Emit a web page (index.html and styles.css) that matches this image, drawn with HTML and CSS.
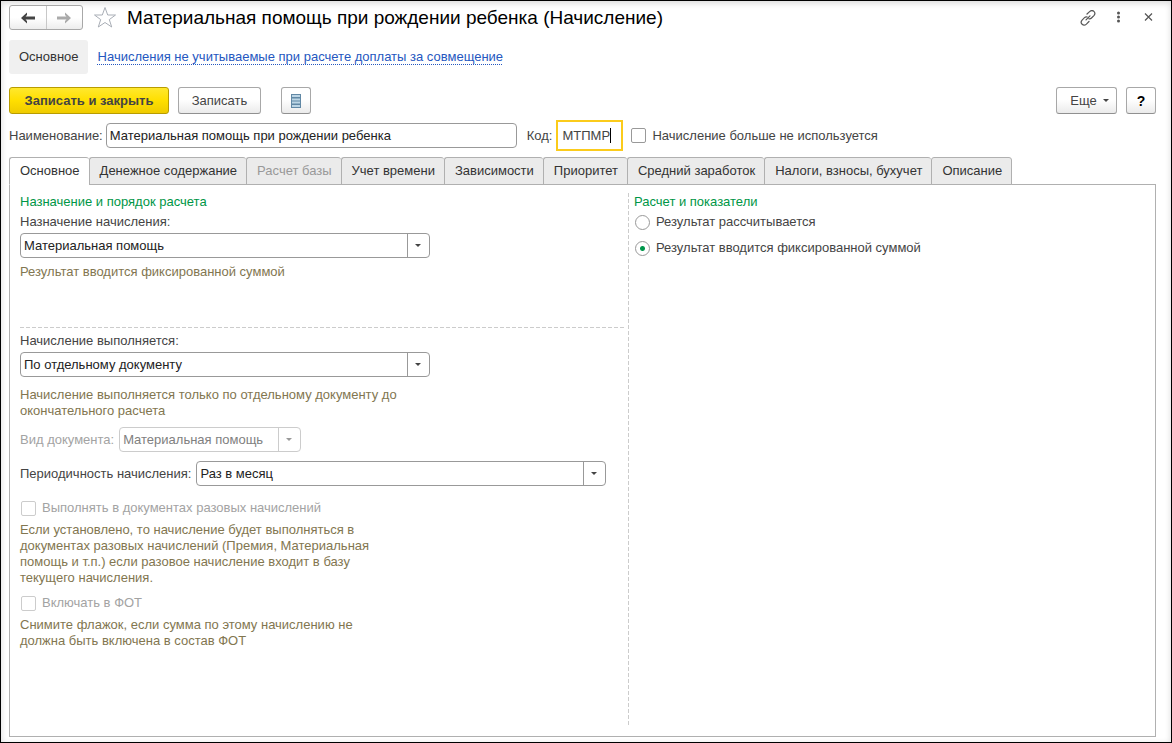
FILE: index.html
```html
<!DOCTYPE html>
<html lang="ru">
<head>
<meta charset="utf-8">
<title>Материальная помощь при рождении ребенка (Начисление)</title>
<link rel="stylesheet" href="styles.css">
</head>
<body>
<div class="window">
  <header class="titlebar">
    <div class="history">
      <button type="button" class="history-btn" aria-label="Назад"><svg width="16" height="12" viewBox="0 0 16 12"><path d="M7 0.500 1 6l6 5.500V9L5.500 7.500H15v-3H5.500L7 3z" fill="#444"/></svg></button>
      <button type="button" class="history-btn" aria-label="Вперед"><svg width="16" height="12" viewBox="0 0 16 12"><path d="M9 0.500 15 6l-6 5.500V9l1.500-1.500H1v-3h9.500L9 3z" fill="#aaa"/></svg></button>
    </div>
    <button type="button" class="icon-btn star" aria-label="В избранное"><svg width="24" height="23" viewBox="0 0 24 23"><path d="M12 1.500 14.700 9H22.500L16.300 13.600 18.700 21 12 16.500 5.300 21 7.700 13.600 1.500 9H9.300z" fill="none" stroke="#a9aeb6" stroke-width="1"/></svg></button>
    <h1 class="title">Материальная помощь при рождении ребенка (Начисление)</h1>
    <div class="window-tools">
      <button type="button" class="icon-btn" aria-label="Ссылка"><svg width="16" height="16" viewBox="0 0 16 16" fill="none" stroke="#555" stroke-width="1.200" stroke-linecap="round"><path d="M7 4 9.600 1.600c3-2.800 7 1 4.300 4L11.500 8c-.8.8-1.800 1-2.700.7"/><path d="M9 11.500 6.400 14.100c-3 2.800-7-1-4.300-4L4.500 7.700c.8-.8 1.800-1 2.700-.7"/><path d="M6 9.800 10 5.800"/></svg></button>
      <button type="button" class="icon-btn" aria-label="Меню"><svg width="16" height="16" viewBox="0 0 16 16" fill="#555"><circle cx="8.500" cy="3" r="1.500"/><circle cx="8.500" cy="7" r="1.500"/><circle cx="8.500" cy="11" r="1.500"/></svg></button>
      <button type="button" class="icon-btn" aria-label="Закрыть"><svg width="16" height="16" viewBox="0 0 16 16" stroke="#555" stroke-width="1.200"><path d="M5 3.500l7 7M12 3.500l-7 7"/></svg></button>
    </div>
  </header>

  <nav class="sections">
    <a class="section-current" href="#main">Основное</a>
    <a class="section-link" href="#compensation">Начисления не учитываемые при расчете доплаты за совмещение</a>
  </nav>

  <div class="commands">
    <button type="button" class="btn btn-primary">Записать и закрыть</button>
    <button type="button" class="btn btn-save">Записать</button>
    <button type="button" class="btn btn-list" aria-label="Список"><svg width="10" height="14" viewBox="0 0 10 14"><rect width="10" height="14" fill="#6188a5"/><path d="M1 2h8M1 5.500h8M1 8.500h8M1 12h8" stroke="#bcd5e5" stroke-width="2"/></svg></button>
    <button type="button" class="btn btn-more">Еще <span class="arrow"></span></button>
    <button type="button" class="btn btn-help">?</button>
  </div>

  <div class="fields">
    <label class="label" for="name">Наименование:</label>
    <input class="input input-name" id="name" type="text" value="Материальная помощь при рождении ребенка">
    <label class="label label-code" for="code">Код:</label>
    <span class="code"><input class="input-code" id="code" type="text" value="МТПМР"><span class="caret"></span></span>
    <label class="option option-unused"><input class="check" type="checkbox">Начисление больше не используется</label>
  </div>

  <div class="tabs" role="tablist">
    <button type="button" class="tab tab-active" role="tab" aria-selected="true">Основное</button>
    <button type="button" class="tab" role="tab">Денежное содержание</button>
    <button type="button" class="tab" role="tab" disabled>Расчет базы</button>
    <button type="button" class="tab" role="tab">Учет времени</button>
    <button type="button" class="tab" role="tab">Зависимости</button>
    <button type="button" class="tab" role="tab">Приоритет</button>
    <button type="button" class="tab" role="tab">Средний заработок</button>
    <button type="button" class="tab" role="tab">Налоги, взносы, бухучет</button>
    <button type="button" class="tab" role="tab">Описание</button>
  </div>

  <main class="panel" id="main">
    <section class="column-main">
      <div class="group group-purpose">
        <h2 class="heading">Назначение и порядок расчета</h2>
        <label class="label purpose-label" for="purpose">Назначение начисления:</label>
        <span class="select-box"><select class="select" id="purpose"><option>Материальная помощь</option></select></span>
        <p class="hint">Результат вводится фиксированной суммой</p>
      </div>
      <div class="group">
        <label class="label" for="execution">Начисление выполняется:</label>
        <span class="select-box"><select class="select" id="execution"><option>По отдельному документу</option></select></span>
        <p class="hint hint-execution">Начисление выполняется только по отдельному документу до окончательного расчета</p>
        <div class="row row-doc">
          <label class="label label-disabled" for="doc">Вид документа:</label>
          <span class="select-box select-box-short select-box-disabled"><select class="select" id="doc" disabled><option>Материальная помощь</option></select></span>
        </div>
        <div class="row">
          <label class="label" for="period">Периодичность начисления:</label>
          <span class="select-box"><select class="select" id="period"><option>Раз в месяц</option></select></span>
        </div>
        <label class="option option-disabled option-once"><input class="check" type="checkbox" disabled>Выполнять в документах разовых начислений</label>
        <p class="hint">Если установлено, то начисление будет выполняться в документах разовых начислений (Премия, Материальная помощь и т.п.) если разовое начисление входит в базу текущего начисления.</p>
        <label class="option option-disabled option-fot"><input class="check" type="checkbox" disabled>Включать в ФОТ</label>
        <p class="hint">Снимите флажок, если сумма по этому начислению не должна быть включена в состав ФОТ</p>
      </div>
    </section>
    <section class="column-result">
      <h2 class="heading">Расчет и показатели</h2>
      <label class="option"><input class="radio" type="radio" name="result">Результат рассчитывается</label>
      <label class="option"><input class="radio" type="radio" name="result" checked>Результат вводится фиксированной суммой</label>
    </section>
  </main>
</div>
</body>
</html>
```
FILE: styles.css
```css
* { box-sizing: border-box; }

body {
  margin: 0;
  background: #fff;
  color: #444;
  font: 13px/16px "Liberation Sans", Arial, sans-serif;
}

button, input, select { font: inherit; color: inherit; }
button { cursor: pointer; }
h1, h2, p { margin: 0; font-weight: normal; }

.window {
  display: flex;
  flex-direction: column;
  min-height: 100vh;
  padding: 4px 15px 5px 8px;
  border: 1px solid #000;
  box-shadow: inset 0 2px 6px #d8d8d8;
}

.titlebar { display: flex; align-items: center; height: 25px; }

.history {
  display: flex;
  width: 74px;
  height: 25px;
  border: 1px solid #a8a8a8;
  border-radius: 3px;
  background: linear-gradient(#fff 50%, #ededed);
}

.history-btn {
  display: flex;
  flex: 1;
  align-items: center;
  justify-content: center;
  padding: 0;
  border: 0;
  background: none;
}

.history-btn + .history-btn { border-left: 1px solid #c8c8c8; }

.icon-btn { display: flex; padding: 0; border: 0; background: none; }
.star { margin-left: 10px; }

.title {
  flex: 1;
  margin-left: 10px;
  color: #000;
  font-size: 19px;
  line-height: 24px;
}

.window-tools { display: flex; gap: 14px; }

.sections { display: flex; align-items: center; gap: 10px; margin-top: 10px; }

.section-current {
  padding: 9px 9px 9px 10px;
  border-radius: 3px;
  background: #f0f0f0;
  color: #333;
  text-decoration: none;
}

.section-link {
  color: #2557c0;
  text-decoration: underline dotted 1px;
  text-underline-offset: 3px;
}

.commands { display: flex; margin-top: 13px; }

.btn {
  display: flex;
  align-items: center;
  justify-content: center;
  height: 27px;
  padding: 0;
  border: 1px solid #a8a8a8;
  border-bottom-color: #909090;
  border-radius: 3px;
  background: linear-gradient(#fff 45%, #ebebeb);
}

.btn-primary {
  width: 160px;
  border-color: #b89c00;
  background: linear-gradient(#ffe82e, #ffdf00 50%, #efcb00);
  font-weight: bold;
}

.btn-save { width: 83px; margin-left: 9px; }
.btn-list { width: 30px; margin-left: 20px; }
.btn-more { gap: 6px; width: 61px; margin-left: auto; padding-left: 6px; }
.btn-help { width: 30px; margin-left: 9px; color: #000; font-size: 14px; font-weight: bold; }

.arrow { border: 3px solid transparent; border-top-color: currentColor; border-bottom: 0; }

.fields { display: flex; align-items: center; height: 31px; margin-top: 6px; }
.label { color: #444; white-space: nowrap; }

.input {
  height: 25px;
  padding: 0 3px;
  border: 1px solid #999;
  border-radius: 4px;
  background: #fff;
  color: #222;
}

.input-name { width: 411px; margin-left: 3px; }
.label-code { margin-left: 10px; }

.code { position: relative; margin-left: 4px; }

.input-code {
  display: block;
  width: 67px;
  height: 31px;
  padding: 0 4px;
  border: 2px solid #fbcb1b;
  outline: 0;
  caret-color: transparent;
}

.caret { position: absolute; top: 8px; left: 54px; width: 1px; height: 15px; background: #000; }

.option { display: flex; align-items: center; gap: 6px; }
.option-unused { margin-left: 7px; }
.option-disabled { color: #a3a3a3; }

.check, .radio {
  appearance: none;
  flex: none;
  width: 15px;
  height: 15px;
  margin: 0 0 0 1px;
  border: 1px solid #999;
  border-radius: 2px;
  background: #fff;
}

.check:disabled { border-color: #ccc; }
.radio { border-radius: 50%; }
.radio:checked { background: radial-gradient(circle, #00964b 2px, #fff 3px); }

.tabs { display: flex; z-index: 1; margin-top: 6px; }

.tab {
  height: 28px;
  padding: 0 9px 0 10px;
  border: 1px solid #b0b0b0;
  border-right-width: 0;
  border-radius: 3px 3px 0 0;
  background: #ebebeb;
  color: #333;
  white-space: nowrap;
}

.tab:last-child { border-right-width: 1px; }
.tab:disabled { color: #999; }
.tab-active { border-bottom-color: #fff; background: #fff; }

/* The active tab covers the panel's top edge. */
.panel {
  display: flex;
  flex: 1;
  margin-top: -1px;
  padding: 8px 10px 11px;
  border: 1px solid #b0b0b0;
}

.column-main {
  flex: 0 1 609px;
  padding-right: 5px;
  background: repeating-linear-gradient(#ccc 0 4px, transparent 4px 6px) right / 1px 100% no-repeat;
}

.column-result { display: flex; flex: 1; flex-direction: column; gap: 10px; padding-left: 5px; }
.column-result .heading { margin-bottom: -6px; }

.heading { padding-top: 1px; color: #009646; font-size: 13px; line-height: 16px; }

.group { display: flex; flex-direction: column; align-items: flex-start; }

.group-purpose {
  height: 135px;
  margin-bottom: 5px;
  background: repeating-linear-gradient(90deg, #ccc 0 4px, transparent 4px 6px) bottom / 100% 1px no-repeat;
}

.purpose-label { margin-top: 4px; }

.select-box {
  position: relative;
  display: flex;
  width: 410px;
  height: 25px;
  border: 1px solid #999;
  border-radius: 4px;
  color: #222;
}

.label + .select-box { margin-top: 3px; }

.select {
  appearance: none;
  flex: 1;
  min-width: 0;
  padding: 0 24px 0 3px;
  border: 0;
  border-radius: 4px;
  background: none;
  opacity: 1;
}

.select-box::before {
  content: "";
  position: absolute;
  inset: 0 0 0 auto;
  width: 21px;
  border-left: 1px solid #999;
  pointer-events: none;
}

.select-box::after {
  content: "";
  position: absolute;
  top: 10px;
  right: 8px;
  border: 3px solid transparent;
  border-top-color: #444;
  border-bottom: 0;
  pointer-events: none;
}

.select-box-short { width: 182px; }
.select-box-disabled, .select-box-disabled::before { border-color: #ccc; }
.select-box-disabled { color: #808080; }
.select-box-disabled::after { border-top-color: #999; }

.hint { max-width: 380px; margin-top: 6px; color: #827650; }
.hint-execution { margin-top: 10px; }

.row { display: flex; align-items: center; gap: 5px; margin-top: 9px; }
.row-doc { margin-top: 8px; }
.row .select-box { margin-top: 0; }
.label-disabled { color: #a3a3a3; }

.option-once { margin-top: 14px; }
.option-fot { margin-top: 9px; }
```
